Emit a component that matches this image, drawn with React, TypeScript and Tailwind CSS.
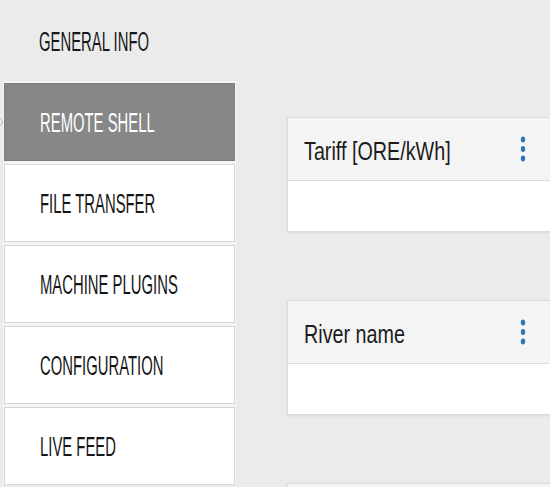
import React from 'react'

const navItems = ['REMOTE SHELL', 'FILE TRANSFER', 'MACHINE PLUGINS', 'CONFIGURATION', 'LIVE FEED']

const Dots = () => (
  <svg width="6" height="26" viewBox="0 0 6 26" className="block">
    <ellipse cx="3" cy="3.5" rx="2.2" ry="3" fill="#2f74bf" />
    <ellipse cx="3" cy="13" rx="2.2" ry="3" fill="#2f74bf" />
    <ellipse cx="3" cy="22.5" rx="2.2" ry="3" fill="#2f74bf" />
  </svg>
)

const NavLabel = ({ text }: { text: string }) => (
  <span className="inline-block origin-left scale-x-[0.55] whitespace-nowrap text-[27px] leading-none font-['Liberation_Sans',sans-serif]">
    {text}
  </span>
)

const Card = ({ title }: { title: string }) => (
  <div className="w-[290px] border border-[#dcdcdc] bg-white shadow-[0_1px_2px_rgba(0,0,0,0.08)]">
    <div className="h-[63px] flex items-center pl-[16px] pr-[50px] bg-[#f4f4f4] border-b border-[#dcdcdc]">
      <span className="inline-block origin-left scale-x-[0.79] whitespace-nowrap text-[25px] leading-none text-[#1c1c1c] font-['Liberation_Sans',sans-serif] pt-[4px]">
        {title}
      </span>
      <div className="ml-auto">
        <Dots />
      </div>
    </div>
    <div className="h-[50px]" />
  </div>
)

const App: React.FC = () => {
  return (
    <div className="relative flex w-[550px] h-[487px] overflow-hidden bg-[#ebebeb]">
      <div className="w-[236px] pl-[3px] shrink-0">
        <div className="h-[81px] flex items-center pl-[36px] pt-[4px] text-[#161616]">
          <NavLabel text="GENERAL INFO" />
        </div>
        <div className="bg-[#f6f6f6] w-[233px] pt-[2px] pl-[1px] flex flex-col gap-[3px]">
          {navItems.map((item, i) => (
            <div
              key={item}
              className={
                i === 0
                  ? 'h-[78px] w-[231px] flex items-center pl-[35px] pt-[2px] bg-[#878787] border border-[#7d7d7d] text-white'
                  : 'h-[78px] w-[231px] flex items-center pl-[35px] pt-[2px] bg-white border border-[#d6d6d6] text-[#161616]'
              }
            >
              <NavLabel text={item} />
            </div>
          ))}
        </div>
      </div>
      <svg width="4" height="8" viewBox="0 0 4 8" className="absolute left-0 top-[118px]">
        <path d="M0.5 0.5 L3 4 L0.5 7.5" stroke="#b5b5b5" strokeWidth="1" fill="none" />
      </svg>
      <div className="flex flex-col gap-[68px] pt-[117px] pl-[51px]">
        <Card title="Tariff [ORE/kWh]" />
        <Card title="River name" />
        <Card title="" />
      </div>
    </div>
  )
}

export default App
